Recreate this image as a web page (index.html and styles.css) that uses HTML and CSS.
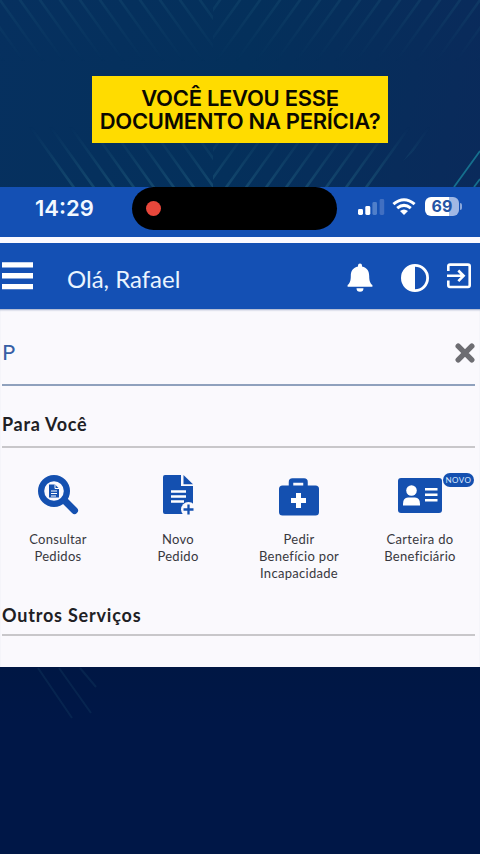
FILE: index.html
```html
<!DOCTYPE html>
<html lang="pt-BR">
<head>
<meta charset="utf-8">
<meta name="viewport" content="width=device-width, initial-scale=1">
<title>Você levou esse documento na perícia?</title>
<link rel="stylesheet" href="styles.css">
</head>
<body>
<main class="page">
  <section class="hero">
    <svg class="hero-lines" viewBox="0 0 480 187" aria-hidden="true">
      <defs>
        <pattern id="left" width="20" height="28" patternUnits="userSpaceOnUse"><path d="M-20 -28L40 56M-20 0L20 56M0 -28L40 28" stroke="#1a5275" stroke-width="2.5" fill="none"/></pattern>
        <pattern id="right" width="20" height="28" patternUnits="userSpaceOnUse"><path d="M40 -28L-20 56M40 0L0 56M20 -28L-20 28" stroke="#1a5275" stroke-width="2.5" fill="none"/></pattern>
        <linearGradient id="fade" x2="0" y2="1"><stop offset="0" stop-color="#fff" stop-opacity=".35"/><stop offset=".33" stop-color="#fff" stop-opacity="0"/><stop offset=".68" stop-color="#fff" stop-opacity="0"/><stop offset="1" stop-color="#fff" stop-opacity=".7"/></linearGradient>
        <mask id="mask"><path d="M0 0H480V90L375 187H60L0 90Z" fill="url(#fade)"/></mask>
      </defs>
      <g mask="url(#mask)">
        <path d="M0 0H213V187H0Z" fill="url(#left)"/>
        <path d="M213 0H480V187H213Z" fill="url(#right)"/>
      </g>
      <path d="M454 187L480 151M474 187L480 179" stroke="#19819a" stroke-width="1.8" opacity=".8"/>
    </svg>
    <h1 class="headline"><span class="line-one">VOCÊ LEVOU ESSE</span><br><span class="line-two">DOCUMENTO NA PERÍCIA?</span></h1>
  </section>

  <div class="status">
    <span class="time">14:29</span>
    <span class="island"><i class="rec"></i></span>
    <svg class="signal" viewBox="0 0 27 18" aria-hidden="true"><rect x="0" y="11" width="5" height="6" rx="1.4" fill="#fff"/><rect x="7.3" y="8" width="5" height="9" rx="1.4" fill="#fff"/><rect x="14.4" y="4" width="4.6" height="13" rx="1.4" fill="#507fca"/><rect x="21.6" y="1" width="4.6" height="16" rx="1.4" fill="#416fc1"/></svg>
    <svg class="wifi" viewBox="0 0 24 18" aria-hidden="true"><g fill="none" stroke="#fff" stroke-width="3"><path d="M1.4 6.2Q12 -2.8 22.6 6.2"/><path d="M5.2 10.2Q12 4.5 18.8 10.2"/></g><path d="M8 13Q12 9.8 16 13L12 17Z" fill="#fff"/></svg>
    <span class="battery">69</span><i class="battery-tip"></i>
  </div>

  <header class="topbar">
    <svg class="menu" viewBox="0 0 32 30" aria-hidden="true"><path d="M0 3.5H32M0 14.7H32M0 26H32" stroke="#fff" stroke-width="5.6"/></svg>
    <span class="hello">Olá, Rafael</span>
    <svg class="bell" viewBox="0 0 26 30" aria-hidden="true"><path d="M13 .5a2 2 0 0 1 2 2v1.1c5 1 7.2 4.7 7.2 9.4 0 5.2 1.1 7.3 3.2 9.1v1.7H.6v-1.7C2.700 20.300 3.800 18.200 3.800 13c0-4.700 2.200-8.400 7.200-9.400V2.500a2 2 0 0 1 2-2Z" fill="#fff"/><path d="M9.500 25.300h7a3.500 3.500 0 0 1-7 0Z" fill="#fff"/></svg>
    <svg class="contrast" viewBox="0 0 28 28" aria-hidden="true"><circle cx="14" cy="14" r="12.600" fill="none" stroke="#fff" stroke-width="2.800"/><path d="M14 1A13 13 0 0 0 14 27Z" fill="#fff"/></svg>
    <svg class="exit" viewBox="0 0 26 26" aria-hidden="true"><g fill="none" stroke="#fff" stroke-width="2.600"><path d="M2.300 8V3.300Q2.300 1.600 4 1.600H22Q23.700 1.600 23.700 3.300V22.300Q23.700 24 22 24H4Q2.300 24 2.300 22.300V17.500"/><path d="M1 12.800H17M12.300 7.500L17.600 12.800L12.300 18.100"/></g></svg>
  </header>

  <section class="content">
    <div class="search">
      <span>P</span>
      <svg class="clear" viewBox="0 0 20 20" aria-hidden="true"><path d="M3.200 3.200L16.800 16.800M16.800 3.200L3.200 16.800" stroke="#6d6d72" stroke-width="5.400" stroke-linecap="round"/></svg>
    </div>
    <h2 class="for-you">Para Você</h2>
    <nav class="services">
      <div class="service">
        <svg class="icon" viewBox="0 0 48 44" aria-hidden="true"><circle cx="20" cy="18" r="12.900" fill="none" stroke="#1450b0" stroke-width="6.200"/><path d="M30.500 27.500L40.500 37.500" stroke="#1450b0" stroke-width="7" stroke-linecap="round"/><path d="M15 11.500h6l4 4v9H15Z" fill="#1450b0"/><path d="M21 11.500v4h4M17 18h6M17 20.500h6M17 23h5" fill="none" stroke="#fff" stroke-width="1"/></svg>
        <span class="label">Consultar<br>Pedidos</span>
      </div>
      <div class="service">
        <svg class="icon" viewBox="0 0 48 44" aria-hidden="true"><path d="M11 2H27V13H39V41H11Q9 41 9 39V4Q9 2 11 2Z" fill="#1450b0"/><path d="M29.500 2L39 11.200H29.500Z" fill="#1450b0"/><path d="M17 18.500H32M17 23.500H32M17 28.500H30" stroke="#fff" stroke-width="2.400"/><circle cx="34.500" cy="36.500" r="7.500" fill="#faf9fd"/><path d="M34.500 31.500V41.500M29.500 36.500H39.500" stroke="#1450b0" stroke-width="2.300"/></svg>
        <span class="label">Novo<br>Pedido</span>
      </div>
      <div class="service">
        <svg class="icon" viewBox="0 0 48 44" aria-hidden="true"><rect x="4" y="12.500" width="40" height="30" rx="3.500" fill="#1450b0"/><path d="M16 13V9Q16 7.500 17.500 7.500H29Q30.500 7.500 30.500 9V13" fill="none" stroke="#1450b0" stroke-width="4.500"/><path d="M23.500 20V35M16 27.500H31" stroke="#fff" stroke-width="5"/></svg>
        <span class="label">Pedir<br>Benefício por<br>Incapacidade</span>
      </div>
      <div class="service">
        <span class="badge">NOVO</span>
        <svg class="icon" viewBox="0 0 48 44" aria-hidden="true"><rect x="2" y="5" width="44" height="35" rx="3" fill="#1450b0"/><circle cx="15.500" cy="17.500" r="5.300" fill="#fff"/><path d="M7 32.500V31Q7 24.500 12 24.500H19Q24 24.500 24 31V32.500Z" fill="#fff"/><path d="M29 16.200H41.500M29 21.700H41.500M29 27.200H41.500" stroke="#fff" stroke-width="2.600"/></svg>
        <span class="label">Carteira do<br>Beneficiário</span>
      </div>
    </nav>
    <h2 class="others">Outros Serviços</h2>
  </section>
  <footer class="bottom">
    <svg viewBox="0 0 100 70" aria-hidden="true"><g fill="none" stroke="#205573" stroke-width="2" opacity=".22"><path d="M38 1L72 51M59 1L91 46M80 1L96 20"/></g></svg>
  </footer>
</main>
</body>
</html>
```
FILE: styles.css
```css
* { box-sizing: border-box; }
body { margin: 0; background: #001747; }
.page { width: 480px; height: 854px; overflow: hidden; display: flex; flex-direction: column; font-family: Lato, "Liberation Sans", sans-serif; }
svg { display: block; flex: none; }
h1, h2 { margin: 0; }

.hero { position: relative; flex: none; height: 187px; padding-top: 76px; background: linear-gradient(100deg, #06305f, #04305b 50%, #0a2a5b); }
.hero-lines { position: absolute; inset: 0; width: 480px; height: 187px; }
.headline { position: relative; width: 296px; height: 67px; margin: 0 auto; padding-top: 11px; background: #ffdc00; color: #0b0900; text-align: center; white-space: nowrap; font: 600 22px/22.500px Inter, sans-serif; }
.line-one { letter-spacing: -.3px; }
.line-two { letter-spacing: -.3px; }

.status { flex: none; height: 50px; display: flex; align-items: flex-start; background: #1450b4; }
.time { width: 98px; margin-left: 35px; padding-top: 7px; color: #f2f8ff; font: 600 22px/28px Inter, sans-serif; }
.island { width: 205px; height: 43px; margin-left: -1px; padding: 14px; border-radius: 22px; background: #000; }
.rec { display: block; width: 15px; height: 15px; border-radius: 50%; background: #e8473b; }
.signal { width: 27px; height: 18px; margin: 11px 0 0 21px; }
.wifi { width: 24px; height: 18px; margin: 11px 0 0 7px; }
.battery { width: 34px; height: 19px; margin: 10px 0 0 9px; border-radius: 6px; background: linear-gradient(90deg, #fff 70%, #a1b8e4 70%); color: #2454a4; text-align: center; font: 700 16px/19px Inter, sans-serif; }
.battery-tip { width: 2px; height: 7px; margin: 16px 0 0 1px; border-radius: 0 3px 3px 0; background: #8ba8db; }

.topbar { flex: none; height: 72px; display: flex; align-items: flex-start; border-top: 6px solid #fbfaff; background: #1450b4; }
.menu { width: 31px; height: 30px; margin: 18px 0 0 2px; }
.hello { width: 280px; margin: 20px 0 0 34px; color: #eaf4ff; font-size: 24px; line-height: 32px; }
.bell { width: 26px; height: 30px; margin-top: 20px; }
.contrast { width: 28px; height: 28px; margin: 21px 0 0 28px; }
.exit { width: 26px; height: 26px; margin: 20px 0 0 17px; }

.content { flex: none; height: 358px; padding: 0 5px 0 2px; background: #faf9fd; box-shadow: inset 0 2px 2px -1px #9ca8c7; color: #202024; }
.search { display: flex; justify-content: space-between; height: 77px; padding-top: 29px; border-bottom: 2px solid #8fa1bd; color: #365fa5; font-size: 22px; line-height: 28px; }
.clear { width: 20px; height: 20px; margin-top: 5px; }
.for-you, .others { border-bottom: 2px solid #c8c7ca; font-size: 18px; line-height: 24px; font-weight: 700; }
.for-you { height: 62px; padding-top: 26px; letter-spacing: .7px; }
.others { height: 33px; letter-spacing: .8px; }
.services { display: grid; grid-template-columns: 112px 128px 114px 128px; height: 155px; margin-right: -10px; padding-top: 25px; }
.service { position: relative; display: flex; flex-direction: column; align-items: center; }
.icon { width: 48px; height: 44px; }
.label { margin-top: 14px; color: #38383d; font-size: 13px; line-height: 17px; letter-spacing: .3px; text-align: center; white-space: nowrap; }
.badge { position: absolute; left: 87px; top: 0; width: 31px; height: 14px; border-radius: 7px; background: #1450b0; color: #dceaff; text-align: center; font-size: 8px; line-height: 14px; letter-spacing: .5px; }

.bottom { flex: 1; background: linear-gradient(#001744, #001747 30%); }
.bottom svg { width: 100px; height: 70px; }
```
